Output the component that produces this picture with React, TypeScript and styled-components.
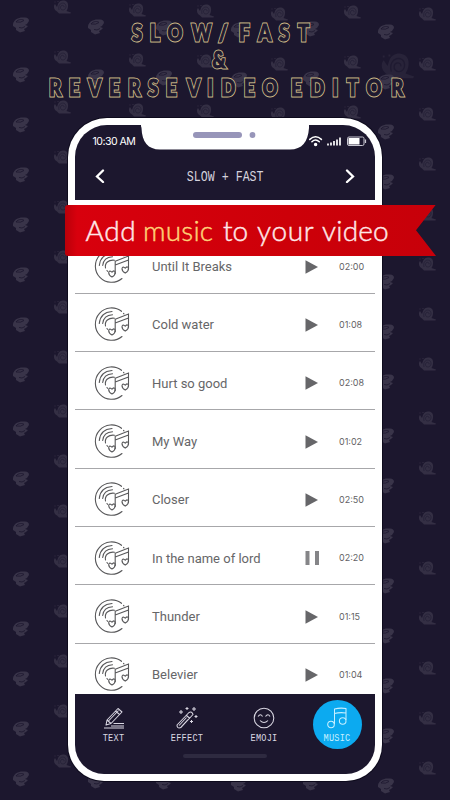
import React from 'react';
import styled, { createGlobalStyle } from 'styled-components';

const GlobalStyle = createGlobalStyle`
  * { box-sizing: border-box; }
  body { margin: 0; background: #1c172e; }
`;

const Page = styled.main`
  position: relative;
  width: 450px;
  height: 800px;
  overflow: hidden;
  background: #1c172e;
  font-family: Roboto, sans-serif;
`;

const Backdrop = styled.svg`
  position: absolute;
  inset: 0;
`;

const Headline = styled.h1`
  position: relative;
  margin: 0;
  height: 118px;
  padding-top: 18.5px;
  font: 900 22px/28px Lato, sans-serif;
`;

const HeadLine = styled.div<{ $left: number }>`
  display: flex;
  height: 27.7px;
  padding-left: ${p => p.$left}px;
`;

const HeadWord = styled.span<{ $width: number; $gap?: number }>`
  display: flex;
  justify-content: space-between;
  width: ${p => p.$width}px;
  margin-right: ${p => p.$gap ?? 0}px;
`;

const Letter = styled.span`
  position: relative;
  transform: scaleX(0.84);
  color: #cdb988;
  -webkit-text-stroke: 3px #cdb988;

  &::after {
    content: attr(data-char);
    position: absolute;
    left: 0;
    top: 0;
    color: #1e1930;
    -webkit-text-stroke: 1.1px #1e1930;
  }
`;

const Phone = styled.section`
  position: relative;
  width: 314px;
  height: 663px;
  margin-left: 68px;
  padding: 7px;
  border-radius: 39px 39px 36px 36px;
  background: #fff;
  box-shadow: 0 0 0 1px #0d0a1c;
`;

const Screen = styled.div`
  display: flex;
  flex-direction: column;
  width: 300px;
  height: 649px;
  overflow: hidden;
  border-radius: 32px 32px 29px 29px;
  background: #fff;
`;

const Header = styled.header`
  height: 74.5px;
  flex: none;
  background: #1c172e;
  color: #fff;
`;

const StatusBar = styled.div`
  display: flex;
  justify-content: space-between;
  height: 25px;
`;

const Clock = styled.time`
  width: 66px;
  padding: 10px 0 0 17.5px;
  font: 400 10.6px/13px Inter, sans-serif;
  white-space: nowrap;
  letter-spacing: -0.55px;
`;

const NotchShape = styled.svg`
  display: block;
  flex: none;
`;

const StatusIcons = styled.div`
  width: 66px;
  padding-top: 8px;
`;

const TitleRow = styled.div`
  display: flex;
  align-items: center;
  justify-content: space-between;
  height: 52px;
  padding: 0 20px;
`;

const Title = styled.h2`
  margin: 0 -12px 0 -11px;
  font: 400 14px/16px 'Liberation Mono', monospace;
  color: #d4d2dd;
  white-space: pre;
  transform: translateY(1px) scale(0.83, 1.08);
`;

const TrackList = styled.ul`
  flex: 1;
  min-height: 0;
  margin: 0;
  padding: 36px 0 0;
  overflow: hidden;
  list-style: none;
`;

const Track = styled.li`
  display: grid;
  grid-template-columns: 77px 151px 36px 1fr;
  align-items: center;
  height: 58.34px;
  border-bottom: 1px solid #a7a7aa;
`;

const DiscCell = styled.span`
  display: flex;
  padding: 4px 0 0 19px;
`;

const TrackName = styled.span`
  padding-top: 5px;
  font-size: 13px;
  color: #666668;
  white-space: nowrap;
`;

const ToggleCell = styled.span`
  display: flex;
  padding: 5px 0 0 2px;
`;

const Duration = styled.time`
  padding-top: 5px;
  font: 400 9px/12px Inter, sans-serif;
  color: #626265;
`;

const TabBar = styled.nav`
  flex: none;
  height: 80px;
  background: #1c172e;
`;

const Tabs = styled.div`
  display: grid;
  grid-template-columns: 77px 70px 84px 62px;
  height: 60px;
`;

const Tab = styled.button<{ $active?: boolean }>`
  display: flex;
  flex-direction: column;
  align-items: center;
  justify-self: center;
  width: 49px;
  height: 49px;
  margin-top: 6px;
  padding: 6.5px 0 0;
  border: 0;
  border-radius: 50%;
  background: ${p => (p.$active ? '#0caaf0' : 'transparent')};
  color: ${p => (p.$active ? '#c6efff' : '#d9d7e2')};
`;

const TabLabel = styled.span`
  margin-top: 5px;
  font: 400 8.6px/10px 'Liberation Mono', monospace;
  letter-spacing: 0.25px;
  transform: scaleY(1.18);
`;

const HomeBar = styled.div`
  width: 84px;
  height: 4px;
  margin: 0 auto;
  border-radius: 2px;
  background: #2e2a40;
`;

const Banner = styled.div`
  position: absolute;
  left: 65px;
  top: 204.5px;
  width: 371px;
  height: 51.5px;
  padding: 8px 0 0 20.5px;
  border-radius: 3px 0 0 3px;
  background: linear-gradient(90deg, #b90009 0, #d8000d 12px, #cd0009 60%, #c7000a 100%);
  clip-path: polygon(0 0, 100% 0, 351px 50%, 100% 100%, 0 100%);
  display: flex;
  font: 300 28px/34px Lato, sans-serif;
  color: #ffe8e8;
`;

const BannerWord = styled.span<{ $width: number; $gold?: boolean; $spacing?: number }>`
  width: ${p => p.$width}px;
  flex: none;
  letter-spacing: ${p => p.$spacing ?? 0}px;
  color: ${p => (p.$gold ? '#ffd277' : '#ffe8e8')};
  -webkit-text-stroke: 0.45px ${p => (p.$gold ? '#ffd277' : '#ffe8e8')};
`;

const columns = [
  { helmet: [21, 25], snail: [62, 7] },
  { helmet: [96, 27], snail: [137, 10] },
  { helmet: [164, 28], snail: [205, 11] },
  { helmet: [239, 30], snail: [279, 14] },
  { helmet: [311, 29], snail: [352, 12] },
  { helmet: [386, 32], snail: [427, 14] },
];
const rowOffsets = Array.from({ length: 16 }, (_, i) => i * 50 + (i >= 8 ? 4 : 0));

function Pattern() {
  return (
    <Backdrop width="450" height="800" viewBox="0 0 450 800">
      <defs>
        <g id="helmet">
          <path fill="#393449" d="M-8-1C-7-6-2-8 3-7.500Q8-8 8-4L6-1 4 0 7 1 5 3 3 4 4 6-1 7.500-5 5-5 3-8 1Z" />
          <path fill="none" stroke="#1f1a31" strokeWidth="0.900" d="M-5-3C-3-6 2-6 3-4.500Q0-2-5-3M-2 2.500 1 3 4 1.500" />
        </g>
        <g id="snail">
          <path fill="#342f44" d="M-5 4.500C-8 3-9-1-7-3L-5 0-4-3C-3-6 0-7 2-6.500 6-6 7-2 5.500 2L4.500 4 9 5.500 8.500 6.500H-3Z" />
          <path fill="none" stroke="#231e35" strokeWidth="0.700" d="M-3 3C-5-5 4-6 4-.500 4 4-2 4-1.500 0-1-2.500 2.500-2 2 .200" />
          <path fill="#342f44" d="M-7.500-5.500h1v1h-1ZM-4.500-6h1v1h-1Z" />
        </g>
      </defs>
      {columns.map(({ helmet, snail }, c) =>
        rowOffsets.map(y => (
          <g key={`${c}-${y}`}>
            <use href="#helmet" x={helmet[0]} y={helmet[1] + y} />
            <use href="#snail" x={snail[0]} y={snail[1] + y} />
          </g>
        )),
      )}
      <use href="#snail" transform="translate(397 66) scale(1.9)" opacity="0.5" />
    </Backdrop>
  );
}

function Word({ text, width, gap }: { text: string; width: number; gap?: number }) {
  return (
    <HeadWord $width={width} $gap={gap}>
      {text.split('').map((ch, i) => <Letter key={i} data-char={ch}>{ch}</Letter>)}
    </HeadWord>
  );
}

const Notch = () => (
  <NotchShape width="168" height="25" viewBox="0 0 168 25">
    <path fill="#fff" d="M-2 0H170Q168.500 0 168 3C167 17 161 24.500 149 24.500H19C7 24.500 1 17 .500 3Q0 0-2 0Z" />
    <rect x="52" y="7" width="49" height="6" rx="3" fill="#9795b9" />
    <circle cx="111.500" cy="10" r="2.900" fill="#9795b9" />
  </NotchShape>
);

const Signals = () => (
  <svg width="60" height="13" viewBox="0 0 60 13" fill="none">
    <g stroke="#fff" strokeWidth="1.500" strokeLinecap="round">
      <path d="M.8 4.400Q6.500-1 12.400 4.400M2.900 6.700Q6.500 3.200 10.300 6.700" />
      <circle cx="6.600" cy="9.400" r="1" fill="#fff" />
    </g>
    <path stroke="#fff" strokeWidth="1.700" d="M19 10.500V8.500M22 10.500V7.500M25 10.500V6M28 10.500V4.500M31 10.500V2.500" />
    <rect x="38.500" y="2" width="16.500" height="8.500" rx="1.500" stroke="#c9c8d2" />
    <path fill="#fff" d="M39.500 3H50.500V9.500H39.500Z" />
    <path stroke="#c9c8d2" strokeWidth="1.200" d="M56.500 4.500V8" />
  </svg>
);

const Chevron = ({ flip }: { flip?: boolean }) => (
  <svg width="10" height="14" viewBox="0 0 10 14" fill="none" stroke="#fff" strokeWidth="2.300" strokeLinecap="round">
    <path d={flip ? 'M2 1.500 8 7.500 2 13' : 'M8 1.500 2 7.500 8 13'} />
  </svg>
);

const Disc = () => (
  <svg width="38" height="36" viewBox="0 0 38 36" fill="none" stroke="#58585a" strokeWidth="1.100" strokeLinecap="round">
    <path d="M27.500 5.300A16.200 16.200 0 1 0 28 30.500M29.500 7.300 30 7.800" />
    <path d="M5.300 17.500C6 10 11 6 18 5.500M8.700 17.500C9.300 12 13 9 18.500 8.700" />
    <path d="M11.500 20C10.500 15 14.500 11.500 20.500 12.200M13 22.500 13.500 23.300" />
    <path d="M21.200 13.300V25.500M21.200 13.300 34.500 8V21M21.200 17 34.500 12" />
    <path d="M18 24.200Q20.800 21.500 21.200 24.500C21.300 26.500 19.300 28.300 18 29 16.700 28.300 14.600 26.500 14.700 24.500 15.300 21.500 18 24.200 18 24.200Z" />
    <path d="M31.200 20.200Q34 17.500 34.500 20.500C34.600 22.500 32.500 24.300 31.200 25 30 24.300 27.900 22.500 28 20.500 28.600 17.500 31.200 20.200 31.200 20.200Z" />
  </svg>
);

const Toggle = ({ playing }: { playing?: boolean }) => (
  <svg width="14" height="14" viewBox="0 0 14 14" fill={playing ? '#858588' : '#666669'}>
    <path d={playing ? 'M.500 0H4.500V14H.500ZM10 0H14V14H10Z' : 'M.500 .300 13 7 .500 13.700Z'} />
  </svg>
);

const tabIcons = {
  TEXT: (
    <path d="M3 18 4 13 15 1.500 19 5 8 16.500ZM4 13 8 16.500M12.500 4 16.500 7.500M5.500 14 15.500 3.500M10.500 16.500H21M8 19H21M1 21H21" />
  ),
  EFFECT: (
    <>
      <path d="M1 18 13 5.500Q16 4 17 7.500L5 20.500Q1 22 1 18ZM10.500 8.500 14 11.500M3 18.500 10.500 10.500M5 20 12 12.500" />
      <path d="M5 3V7M3 5H7M11 0V3M9.500 1.500H12.500M18 0V4M16 2H20M20 8V11M18.500 9.500H21.500M15.500 13V16M14 14.500H17" />
    </>
  ),
  EMOJI: (
    <>
      <circle cx="11" cy="11" r="9.800" />
      <path d="M5 9.500Q7.500 6 9.500 9.500M12.500 9.500Q15 6 17 9.500M7 13.500Q11 17.500 15 13.500" />
    </>
  ),
  MUSIC: (
    <>
      <path d="M8.500 17V2Q14 .500 20 1.500V13M8.500 6.500Q14 5 20 6" />
      <circle cx="5" cy="17.500" r="3.300" />
      <circle cx="16.700" cy="14" r="3.300" />
    </>
  ),
};

const tracks = [
  ['Until It Breaks', '02:00'],
  ['Cold water', '01:08'],
  ['Hurt so good', '02:08'],
  ['My Way', '01:02'],
  ['Closer', '02:50'],
  ['In the name of lord', '02:20'],
  ['Thunder', '01:15'],
  ['Belevier', '01:04'],
];

export default function App() {
  return (
    <Page>
      <GlobalStyle />
      <Pattern />
      <Headline>
        <HeadLine $left={131}>
          <Word text="SLOW" width={82} gap={5} />
          <Word text="/" width={9} gap={11} />
          <Word text="FAST" width={72} />
        </HeadLine>
        <HeadLine $left={211}><Word text="&" width={16} /></HeadLine>
        <HeadLine $left={48}>
          <Word text="REVERSE" width={130} gap={8} />
          <Word text="VIDEO" width={93} gap={11} />
          <Word text="EDITOR" width={114} />
        </HeadLine>
      </Headline>
      <Phone>
        <Screen>
          <Header>
            <StatusBar>
              <Clock>10:30 AM</Clock>
              <Notch />
              <StatusIcons><Signals /></StatusIcons>
            </StatusBar>
            <TitleRow>
              <Chevron />
              <Title>SLOW + FAST</Title>
              <Chevron flip />
            </TitleRow>
          </Header>
          <TrackList>
            {tracks.map(([name, time]) => (
              <Track key={name}>
                <DiscCell><Disc /></DiscCell>
                <TrackName>{name}</TrackName>
                <ToggleCell><Toggle playing={time === '02:20'} /></ToggleCell>
                <Duration>{time}</Duration>
              </Track>
            ))}
          </TrackList>
          <TabBar>
            <Tabs>
              {(Object.keys(tabIcons) as (keyof typeof tabIcons)[]).map(label => (
                <Tab key={label} $active={label === 'MUSIC'}>
                  <svg width="22" height="22" viewBox="0 0 22 22" fill="none" stroke="currentColor" strokeWidth="1.050" strokeLinejoin="round">
                    {tabIcons[label]}
                  </svg>
                  <TabLabel>{label}</TabLabel>
                </Tab>
              ))}
            </Tabs>
            <HomeBar />
          </TabBar>
        </Screen>
      </Phone>
      <Banner>
        <BannerWord $width={57.5} $spacing={0.6}>Add</BannerWord>
        <BannerWord $width={80} $gold $spacing={0.2}>music</BannerWord>
        <BannerWord $width={34}>to</BannerWord>
        <BannerWord $width={65} $spacing={0.7}>your</BannerWord>
        <BannerWord $width={70} $spacing={0.2}>video</BannerWord>
      </Banner>
    </Page>
  );
}
